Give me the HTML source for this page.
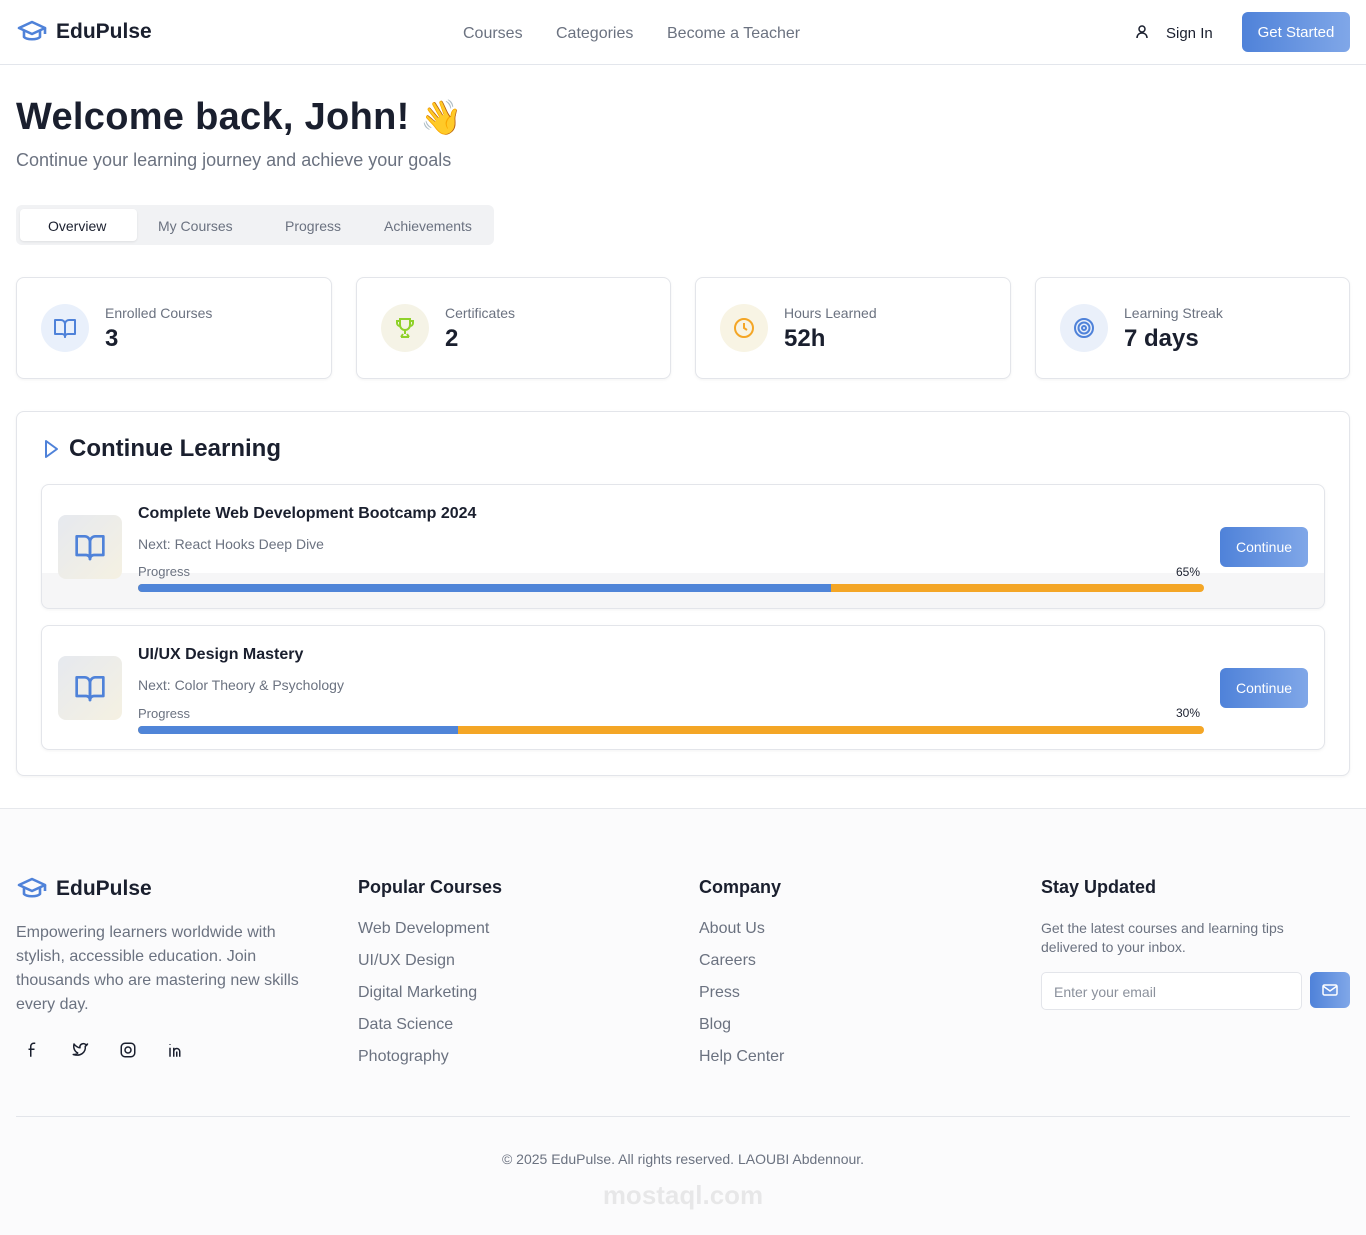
<!DOCTYPE html>
<html><head><meta charset="utf-8"><style>
*{box-sizing:border-box;margin:0;padding:0}
body{width:1366px;height:1235px;position:relative;background:#fff;font-family:"Liberation Sans",sans-serif;color:#1a1f2e;overflow:hidden}
.a{position:absolute;white-space:nowrap}
.g{color:#6b7280}
.card{position:absolute;border:1px solid #e3e5ea;border-radius:8px;background:#fff;box-shadow:0 1px 3px rgba(0,0,0,.05)}
.ic{position:absolute;width:48px;height:48px;border-radius:50%;display:flex;align-items:center;justify-content:center}
.btn{position:absolute;background:linear-gradient(90deg,#4f82d9,#80a7e8);color:#fff;border-radius:6px;display:flex;align-items:center;justify-content:center;font-size:14px}
.bar{position:absolute;left:138px;width:1066px;height:8px;border-radius:4px;background:#f4a626;overflow:hidden}
.bar i{display:block;height:100%;background:#5085d8}
.thumb{position:absolute;left:58px;width:64px;height:64px;border-radius:8px;background:linear-gradient(135deg,#e6e9ef,#f5f1e2);display:flex;align-items:center;justify-content:center}
</style></head><body>
<!-- header -->
<div class="a" style="left:0;top:64px;width:1366px;height:1px;background:#e3e6ec"></div>
<svg class="a" style="left:17px;top:19px" width="30" height="26" viewBox="0 0 30 26" fill="none" stroke="#4f82d9" stroke-width="2.6" stroke-linejoin="round"><path d="M2 9L15 3l13 6-13 6z"/><path d="M7 12v6c3 3 13 3 16 0v-6"/><path d="M28 9v6"/></svg>
<div class="a" style="left:56px;top:20px;font-size:21px;font-weight:bold">EduPulse</div>
<div class="a g" style="left:463px;top:25px;font-size:16px">Courses</div>
<div class="a g" style="left:556px;top:25px;font-size:16px">Categories</div>
<div class="a g" style="left:667px;top:25px;font-size:16px">Become a Teacher</div>
<svg class="a" style="left:1134px;top:24px" width="16" height="16" viewBox="0 0 16 16" fill="none" stroke="#1a1f2e" stroke-width="1.5"><circle cx="8" cy="5" r="3"/><path d="M3 14c0-3 2-5 5-5s5 2 5 5"/></svg>
<div class="a" style="left:1166px;top:25px;font-size:15px">Sign In</div>
<div class="btn" style="left:1242px;top:12px;width:108px;height:40px;font-size:15px">Get Started</div>
<!-- hero -->
<div class="a" style="left:16px;top:96px;font-size:38px;font-weight:bold;letter-spacing:0.3px">Welcome back, John! <span style="font-size:34px">👋</span></div>
<div class="a g" style="left:16px;top:150px;font-size:18px">Continue your learning journey and achieve your goals</div>
<div class="a" style="left:16px;top:205px;width:478px;height:40px;background:#f1f2f4;border-radius:6px"></div>
<div class="a" style="left:20px;top:209px;width:117px;height:32px;background:#fff;border-radius:4px;box-shadow:0 1px 2px rgba(0,0,0,.08)"></div>
<div class="a" style="left:48px;top:218px;font-size:14px">Overview</div>
<div class="a g" style="left:158px;top:218px;font-size:14px">My Courses</div>
<div class="a g" style="left:285px;top:218px;font-size:14px">Progress</div>
<div class="a g" style="left:384px;top:218px;font-size:14px">Achievements</div>
<!-- stats -->
<div class="card" style="left:16px;top:277px;width:316px;height:102px"></div>
<div class="card" style="left:356px;top:277px;width:315px;height:102px"></div>
<div class="card" style="left:695px;top:277px;width:316px;height:102px"></div>
<div class="card" style="left:1035px;top:277px;width:315px;height:102px"></div>
<div class="ic" style="left:41px;top:304px;background:#e9f0fb"><svg width="24" height="24" viewBox="0 0 24 24" fill="none" stroke="#4f82d9" stroke-width="2" stroke-linejoin="round"><path d="M2 4h6a4 4 0 014 4v13a3 3 0 00-3-3H2z"/><path d="M22 4h-6a4 4 0 00-4 4v13a3 3 0 013-3h7z"/></svg></div>
<div class="ic" style="left:381px;top:304px;background:#f5f3e6"><svg width="24" height="24" viewBox="0 0 24 24" fill="none" stroke="#8fd12a" stroke-width="2"><path d="M7 3h10v6a5 5 0 01-10 0z"/><path d="M7 5H4v2a3 3 0 003 3M17 5h3v2a3 3 0 01-3 3M12 14v4M8 21h8M10 18l-2 3M14 18l2 3"/></svg></div>
<div class="ic" style="left:720px;top:304px;background:#f8f4e4"><svg width="24" height="24" viewBox="0 0 24 24" fill="none" stroke="#f4a626" stroke-width="2"><circle cx="12" cy="12" r="9"/><path d="M12 7v5l3 2"/></svg></div>
<div class="ic" style="left:1060px;top:304px;background:#eaf0fa"><svg width="24" height="24" viewBox="0 0 24 24" fill="none" stroke="#4f82d9" stroke-width="2"><circle cx="12" cy="12" r="9"/><circle cx="12" cy="12" r="5.5"/><circle cx="12" cy="12" r="2"/></svg></div>
<div class="a g" style="left:105px;top:305px;font-size:14px">Enrolled Courses</div>
<div class="a" style="left:105px;top:325px;font-size:24px;font-weight:bold">3</div>
<div class="a g" style="left:445px;top:305px;font-size:14px">Certificates</div>
<div class="a" style="left:445px;top:325px;font-size:24px;font-weight:bold">2</div>
<div class="a g" style="left:784px;top:305px;font-size:14px">Hours Learned</div>
<div class="a" style="left:784px;top:325px;font-size:24px;font-weight:bold">52h</div>
<div class="a g" style="left:1124px;top:305px;font-size:14px">Learning Streak</div>
<div class="a" style="left:1124px;top:325px;font-size:24px;font-weight:bold">7 days</div>
<!-- continue learning -->
<div class="card" style="left:16px;top:411px;width:1334px;height:365px"></div>
<svg class="a" style="left:44px;top:439px" width="16" height="20" viewBox="0 0 16 20" fill="none" stroke="#4f82d9" stroke-width="2" stroke-linejoin="round"><path d="M2 2l11 8-11 8z"/></svg>
<div class="a" style="left:69px;top:435px;font-size:24px;font-weight:bold">Continue Learning</div>

<div class="card" style="left:41px;top:484px;width:1284px;height:125px;background:linear-gradient(180deg,#fff 0,#fff 88px,#f6f6f7 88px)"></div>
<div class="thumb" style="top:515px"><svg width="32" height="32" viewBox="0 0 24 24" fill="none" stroke="#4f82d9" stroke-width="2" stroke-linejoin="round"><path d="M2 4h6a4 4 0 014 4v13a3 3 0 00-3-3H2z"/><path d="M22 4h-6a4 4 0 00-4 4v13a3 3 0 013-3h7z"/></svg></div>
<div class="a" style="left:138px;top:505px;font-size:16px;font-weight:bold">Complete Web Development Bootcamp 2024</div>
<div class="a g" style="left:138px;top:536px;font-size:14px">Next: React Hooks Deep Dive</div>
<div class="a g" style="left:138px;top:564px;font-size:13px">Progress</div>
<div class="a" style="left:1176px;top:565px;font-size:12px;color:#1a1f2e">65%</div>
<div class="bar" style="top:584px"><i style="width:65%"></i></div>
<div class="btn" style="left:1220px;top:527px;width:88px;height:40px">Continue</div>

<div class="card" style="left:41px;top:625px;width:1284px;height:125px"></div>
<div class="thumb" style="top:656px"><svg width="32" height="32" viewBox="0 0 24 24" fill="none" stroke="#4f82d9" stroke-width="2" stroke-linejoin="round"><path d="M2 4h6a4 4 0 014 4v13a3 3 0 00-3-3H2z"/><path d="M22 4h-6a4 4 0 00-4 4v13a3 3 0 013-3h7z"/></svg></div>
<div class="a" style="left:138px;top:646px;font-size:16px;font-weight:bold">UI/UX Design Mastery</div>
<div class="a g" style="left:138px;top:677px;font-size:14px">Next: Color Theory &amp; Psychology</div>
<div class="a g" style="left:138px;top:706px;font-size:13px">Progress</div>
<div class="a" style="left:1176px;top:706px;font-size:12px;color:#1a1f2e">30%</div>
<div class="bar" style="top:726px"><i style="width:30%"></i></div>
<div class="btn" style="left:1220px;top:668px;width:88px;height:40px">Continue</div>
<!-- footer -->
<div class="a" style="left:0;top:808px;width:1366px;height:427px;background:#fbfbfc;border-top:1px solid #e6e8ec"></div>
<svg class="a" style="left:17px;top:876px" width="30" height="26" viewBox="0 0 30 26" fill="none" stroke="#4f82d9" stroke-width="2.6" stroke-linejoin="round"><path d="M2 9L15 3l13 6-13 6z"/><path d="M7 12v6c3 3 13 3 16 0v-6"/><path d="M28 9v6"/></svg>
<div class="a" style="left:56px;top:877px;font-size:21px;font-weight:bold">EduPulse</div>
<div class="a g" style="left:16px;top:921px;font-size:16px;line-height:24px;white-space:normal;width:310px">Empowering learners worldwide with stylish, accessible education. Join thousands who are mastering new skills every day.</div>
<svg class="a" style="left:24px;top:1041px" width="18" height="18" viewBox="0 0 24 24" fill="none" stroke="#1a1f2e" stroke-width="2"><path d="M15 3h-2a4 4 0 00-4 4v14M6 11h8"/></svg>
<svg class="a" style="left:71px;top:1041px" width="18" height="18" viewBox="0 0 24 24" fill="none" stroke="#1a1f2e" stroke-width="2" stroke-linejoin="round"><path d="M22 4s-1 2-3 3c1 8-6 14-16 11 4 0 6-2 6-2s-7-3-5-12c2 3 6 5 8 5-1-5 5-7 8-4 1 0 2-1 2-1z"/></svg>
<svg class="a" style="left:119px;top:1041px" width="18" height="18" viewBox="0 0 24 24" fill="none" stroke="#1a1f2e" stroke-width="2"><rect x="3" y="3" width="18" height="18" rx="5"/><circle cx="12" cy="12" r="4"/></svg>
<svg class="a" style="left:167px;top:1041px" width="18" height="18" viewBox="0 0 24 24" fill="none" stroke="#1a1f2e" stroke-width="2"><path d="M4 9v12M4 4v1M9 21V9M9 14a4 4 0 018 0v7M13 14v7M17 14a4 4 0 00-4-4"/></svg>

<div class="a" style="left:358px;top:877px;font-size:18px;font-weight:bold">Popular Courses</div>
<div class="a g" style="left:358px;top:913px;font-size:16px;line-height:32px">Web Development<br>UI/UX Design<br>Digital Marketing<br>Data Science<br>Photography</div>
<div class="a" style="left:699px;top:877px;font-size:18px;font-weight:bold">Company</div>
<div class="a g" style="left:699px;top:913px;font-size:16px;line-height:32px">About Us<br>Careers<br>Press<br>Blog<br>Help Center</div>
<div class="a" style="left:1041px;top:877px;font-size:18px;font-weight:bold">Stay Updated</div>
<div class="a g" style="left:1041px;top:919px;font-size:14px;line-height:19px">Get the latest courses and learning tips<br>delivered to your inbox.</div>
<div class="a" style="left:1041px;top:972px;width:261px;height:38px;border:1px solid #e3e5ea;border-radius:5px;background:#fff"></div>
<div class="a" style="left:1054px;top:984px;font-size:14px;color:#8b919c">Enter your email</div>
<div class="btn" style="left:1310px;top:972px;width:40px;height:36px"><svg width="16" height="14" viewBox="0 0 16 14" fill="none" stroke="#fff" stroke-width="1.5"><rect x="1" y="2" width="14" height="10" rx="1.5"/><path d="M1 3l7 5 7-5"/></svg></div>
<div class="a" style="left:16px;top:1116px;width:1334px;height:1px;background:#e3e5ea"></div>
<div class="a g" style="left:0;width:1366px;text-align:center;top:1151px;font-size:14px">© 2025 EduPulse. All rights reserved. LAOUBI Abdennour.</div>
<div class="a" style="left:0;width:1366px;text-align:center;top:1180px;font-size:26px;font-weight:bold;color:rgba(0,0,0,.08)">mostaql.com</div>
</body></html>
